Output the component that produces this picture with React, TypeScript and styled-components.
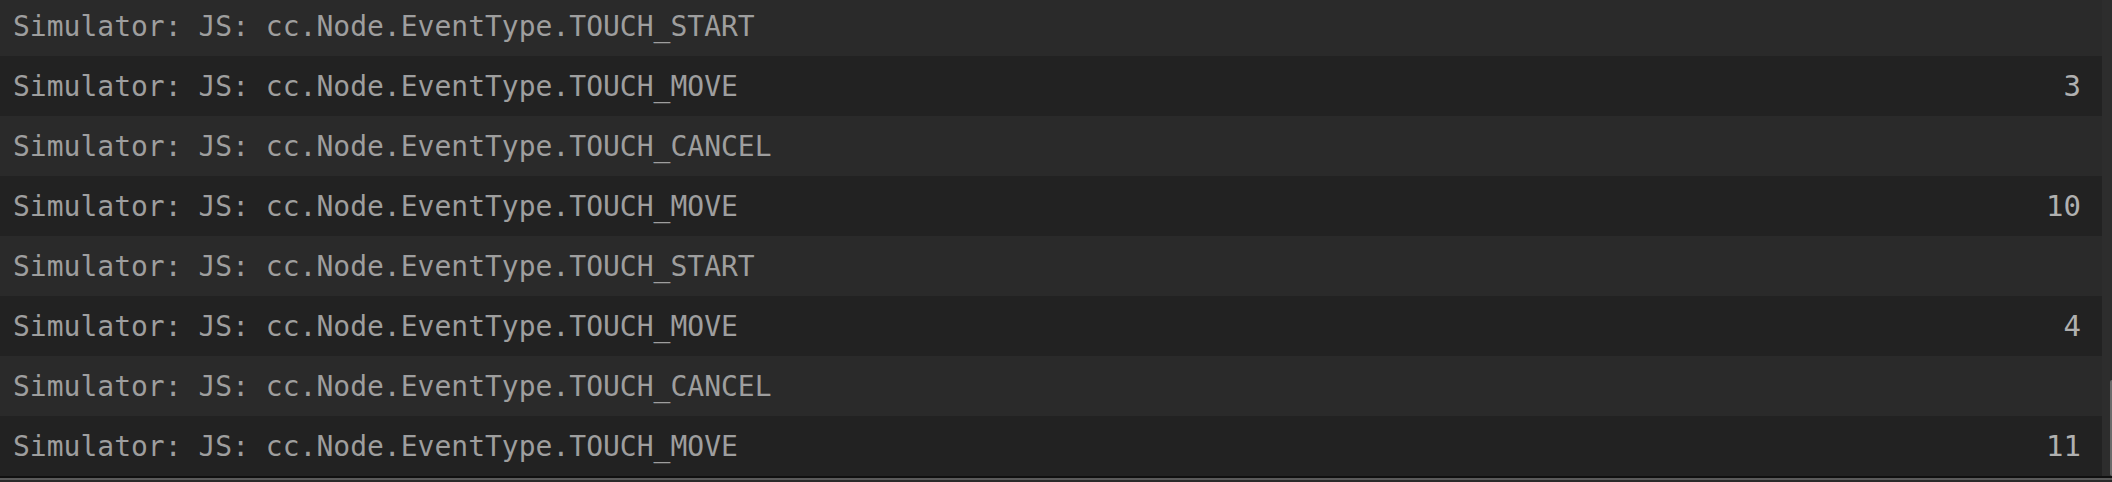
import React from "react";
import styled, { createGlobalStyle } from "styled-components";

const Global = createGlobalStyle`
  html, body { margin: 0; padding: 0; background: #2a2a2a; }
  body { overflow: hidden; }
`;

const Frame = styled.div`
  width: 2112px;
  height: 482px;
  display: flex;
  flex-direction: column;
  overflow: hidden;
  background: #2a2a2a;
`;

const Body = styled.div`
  height: 476px;
  display: flex;
  flex-direction: row;
  overflow: hidden;
`;

const List = styled.div`
  flex: 1;
  display: flex;
  flex-direction: column;
  margin-top: -4px;
`;

const Row = styled.div<{ $dark: boolean }>`
  height: 60px;
  flex: none;
  display: flex;
  align-items: center;
  justify-content: space-between;
  padding: 0 21px 0 13px;
  background: ${(p) => (p.$dark ? "#222222" : "#2a2a2a")};
  font-family: "DejaVu Sans Mono", Menlo, monospace;
  font-size: 28px;
  color: #9e9e9e;
`;

const Message = styled.span`
  white-space: nowrap;
`;

const Count = styled.span`
  color: #b0b0b0;
  font-size: 29px;
  white-space: nowrap;
`;

const Track = styled.div`
  width: 10px;
  flex: none;
  background: #2d2d2d;
  display: flex;
  flex-direction: column;
  justify-content: flex-end;
  align-items: flex-end;
`;

const Thumb = styled.div`
  width: 2px;
  height: 96px;
  background: #6b6b6b;
  border-radius: 2px 0 0 2px;
`;

const BottomEdge = styled.div`
  flex: none;
  height: 6px;
  border-top: 2px solid #101010;
  border-bottom: 2px solid #2a2a2a;
  background: #5a5a5a;
  box-sizing: border-box;
`;

const rows: { text: string; count?: number }[] = [
  { text: "Simulator: JS: cc.Node.EventType.TOUCH_START" },
  { text: "Simulator: JS: cc.Node.EventType.TOUCH_MOVE", count: 3 },
  { text: "Simulator: JS: cc.Node.EventType.TOUCH_CANCEL" },
  { text: "Simulator: JS: cc.Node.EventType.TOUCH_MOVE", count: 10 },
  { text: "Simulator: JS: cc.Node.EventType.TOUCH_START" },
  { text: "Simulator: JS: cc.Node.EventType.TOUCH_MOVE", count: 4 },
  { text: "Simulator: JS: cc.Node.EventType.TOUCH_CANCEL" },
  { text: "Simulator: JS: cc.Node.EventType.TOUCH_MOVE", count: 11 },
];

export default function App() {
  return (
    <>
      <Global />
      <Frame>
        <Body>
          <List>
            {rows.map((r, i) => (
              <Row key={i} $dark={i % 2 === 1}>
                <Message>{r.text}</Message>
                {r.count !== undefined && <Count>{r.count}</Count>}
              </Row>
            ))}
          </List>
          <Track>
            <Thumb />
          </Track>
        </Body>
        <BottomEdge />
      </Frame>
    </>
  );
}
